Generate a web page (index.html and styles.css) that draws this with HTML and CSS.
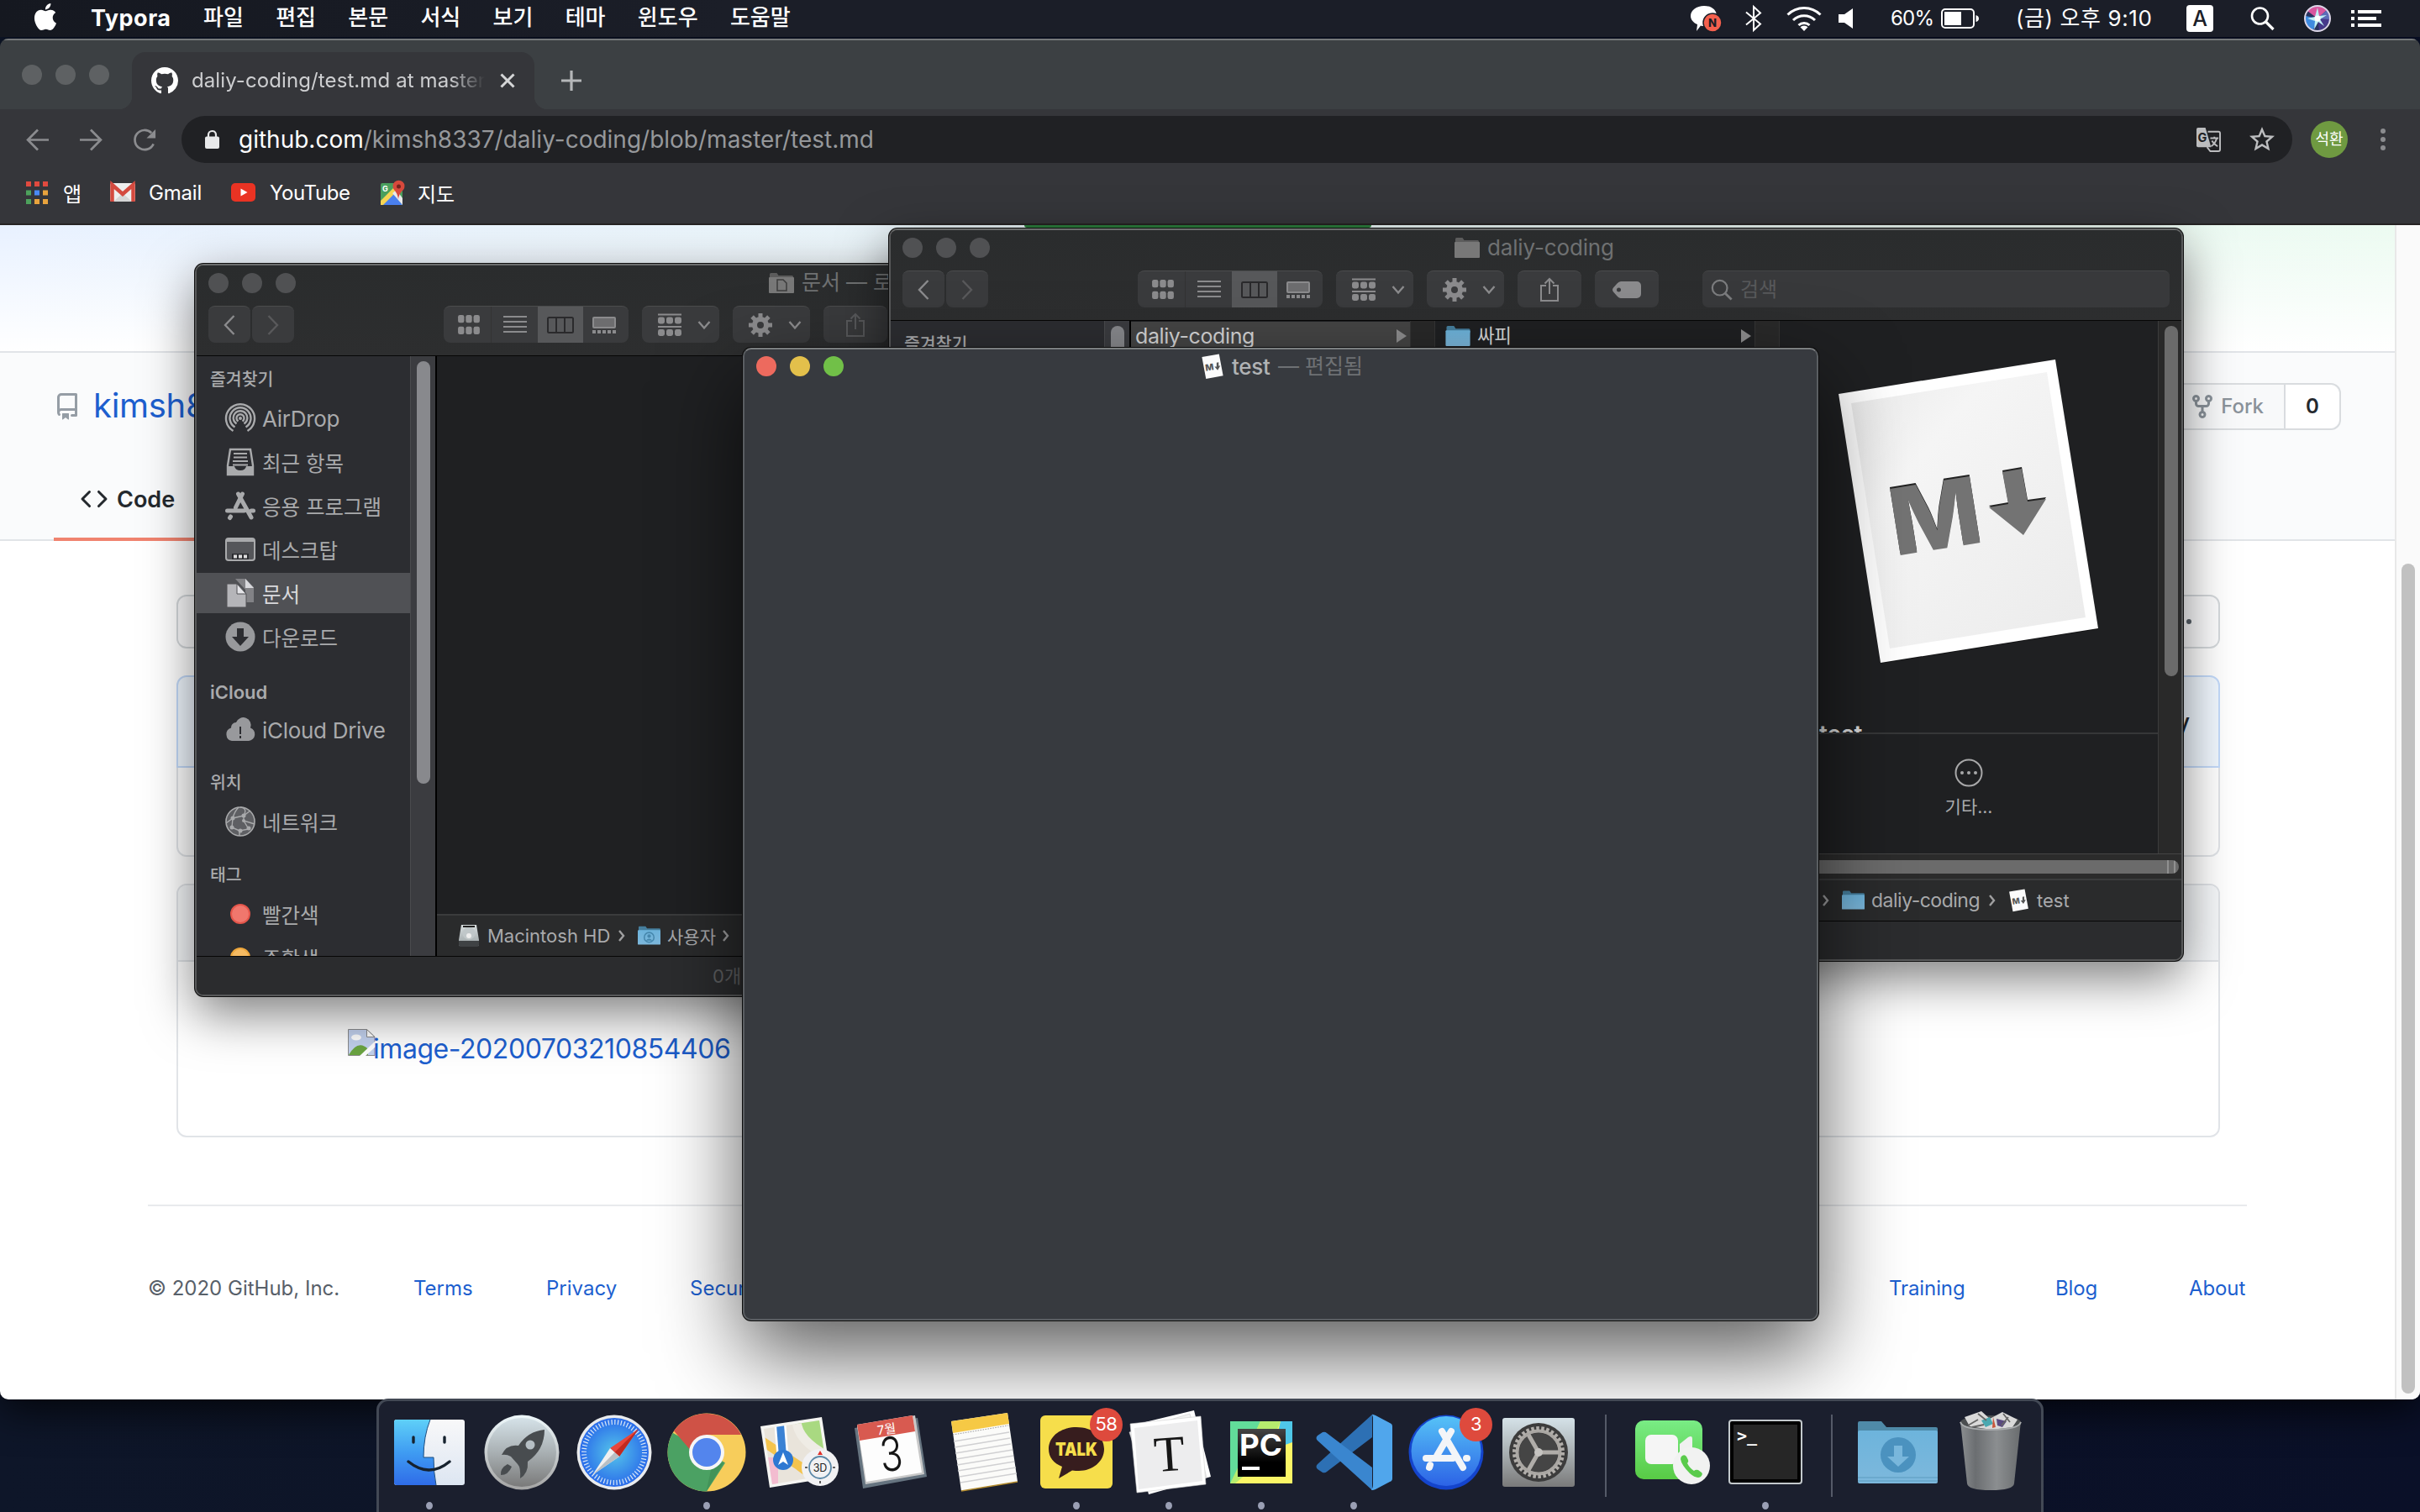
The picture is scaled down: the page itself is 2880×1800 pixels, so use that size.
FILE: index.html
```html
<!DOCTYPE html>
<html lang="ko">
<head>
<meta charset="utf-8">
<title>Desktop</title>
<link rel="stylesheet" href="styles.css">
</head>
<body>
<svg class="defs" width="0" height="0" aria-hidden="true">
  <defs>
    <linearGradient id="gBlueFolder" x1="0" y1="0" x2="0" y2="1"><stop offset="0" stop-color="#6db4dc"/><stop offset="1" stop-color="#7db8dc"/></linearGradient>
    <linearGradient id="gFinderL" x1="0" y1="0" x2="0" y2="1"><stop offset="0" stop-color="#5fd0f8"/><stop offset=".5" stop-color="#3f9cf2"/><stop offset="1" stop-color="#2f6ce8"/></linearGradient>
    <linearGradient id="gFinderR" x1="0" y1="0" x2="0" y2="1"><stop offset="0" stop-color="#f8f8f9"/><stop offset="1" stop-color="#dde6f2"/></linearGradient>
    <linearGradient id="gSilver" x1="0" y1="0" x2="0" y2="1"><stop offset="0" stop-color="#d5e2e8"/><stop offset=".5" stop-color="#a9b0b3"/><stop offset="1" stop-color="#7a7a7a"/></linearGradient>
    <linearGradient id="gRim" x1="0" y1="0" x2="0" y2="1"><stop offset="0" stop-color="#eef8fb"/><stop offset="1" stop-color="#a4a4a4"/></linearGradient>
    <radialGradient id="gSafari"><stop offset="0" stop-color="#55c5ea"/><stop offset="1" stop-color="#2a6cea"/></radialGradient>
    <linearGradient id="gStore" x1="0" y1="0" x2="0" y2="1"><stop offset="0" stop-color="#56c2f7"/><stop offset="1" stop-color="#2c63e6"/></linearGradient>
    <linearGradient id="gFace" x1="0" y1="0" x2="0" y2="1"><stop offset="0" stop-color="#79ec85"/><stop offset="1" stop-color="#58cb45"/></linearGradient>
    <linearGradient id="gTrash" x1="0" y1="0" x2="1" y2="0"><stop offset="0" stop-color="#8c8f91"/><stop offset=".25" stop-color="#6b6e71"/><stop offset=".6" stop-color="#8b8e90"/><stop offset="1" stop-color="#696c6e"/></linearGradient>
    <linearGradient id="gPC" x1="0" y1="0" x2="0" y2="1"><stop offset="0" stop-color="#444"/><stop offset=".7" stop-color="#000"/></linearGradient>
    <linearGradient id="gPaper" x1="0" y1="0" x2="1" y2="1"><stop offset="0" stop-color="#eaeaea"/><stop offset=".3" stop-color="#f5f5f5"/><stop offset="1" stop-color="#ebebeb"/></linearGradient>
    <linearGradient id="gHD" x1="0" y1="0" x2="0" y2="1"><stop offset="0" stop-color="#d9dfe0"/><stop offset="1" stop-color="#9aa2a4"/></linearGradient>
  </defs>
  <symbol id="i-grid" viewBox="0 0 28 26"><g fill="currentColor"><rect width="8" height="10" rx="2.5"/><rect x="10" width="8" height="10" rx="2.5"/><rect x="20" width="8" height="10" rx="2.5"/><rect y="15" width="8" height="10" rx="2.5"/><rect x="10" y="15" width="8" height="10" rx="2.5"/><rect x="20" y="15" width="8" height="10" rx="2.5"/></g></symbol>
  <symbol id="i-list" viewBox="0 0 28 22"><g fill="currentColor"><rect width="28" height="2"/><rect y="6" width="28" height="2"/><rect y="12" width="28" height="2"/><rect y="18" width="28" height="2"/></g></symbol>
  <symbol id="i-cols" viewBox="0 0 32 20"><g fill="none" stroke="#2a2a2c" stroke-width="2"><rect x="1" y="1" width="30" height="18" rx="1.5"/><path d="M11 1v18M21 1v18"/></g></symbol>
  <symbol id="i-gal" viewBox="0 0 28 20"><rect x="1" y="1" width="26" height="12" rx="1" fill="#6d6d6f" stroke="currentColor" stroke-width="2"/><path d="M0 18h4m2 0h4m2 0h4m2 0h4m2 0h4" stroke="currentColor" stroke-width="4"/></symbol>
  <symbol id="i-group" viewBox="0 0 28 27"><g fill="currentColor"><rect width="28" height="2"/><rect y="4" width="8" height="8" rx="2.4"/><rect x="10" y="4" width="8" height="8" rx="2.4"/><rect x="20" y="4" width="8" height="8" rx="2.4"/><rect y="14.500" width="28" height="2"/><rect y="18.500" width="8" height="8" rx="2.400"/><rect x="10" y="18.500" width="8" height="8" rx="2.400"/><rect x="20" y="18.500" width="8" height="8" rx="2.400"/></g></symbol>
  <symbol id="i-down" viewBox="0 0 16 12"><path d="M1.500 2l6.500 7.500L14.500 2" fill="none" stroke="currentColor" stroke-width="2.400"/></symbol>
  <symbol id="i-gear" viewBox="0 0 28 28"><circle cx="14" cy="14" r="7" fill="none" stroke="currentColor" stroke-width="6"/><g stroke="currentColor" stroke-width="5"><path d="M14 0v6M14 22v6M0 14h6M22 14h6M4.100 4.100l4.300 4.300M19.600 19.600l4.300 4.300M4.100 23.900l4.300-4.300M19.600 8.400l4.300-4.300"/></g></symbol>
  <symbol id="i-share" viewBox="0 0 24 30"><path d="M8 10H2v18h20V10h-6M12 20V2M6.500 7.500L12 2l5.500 5.500" fill="none" stroke="currentColor" stroke-width="2"/></symbol>
  <symbol id="i-tag" viewBox="0 0 34 20"><path fill="currentColor" fill-rule="evenodd" d="M10 0h19a5 5 0 015 5v10a5 5 0 01-5 5H10c-2 0-3-1-4.500-2.500L1 12.500Q-1 10 1 7.500l4.500-5Q7.500 0 10 0zM7.500 7.500a2.500 2.500 0 100 5 2.500 2.500 0 000-5z"/></symbol>
  <symbol id="i-mag" viewBox="0 0 28 28"><g fill="none" stroke="currentColor"><circle cx="11.500" cy="11.500" r="9.500" stroke-width="2.400"/><path d="M18.500 18.500l8 8" stroke-width="3"/></g></symbol>
  <symbol id="i-folder" viewBox="0 0 28 24"><path d="M1 1.500Q1 0 2.500 0h7l2 3h15q1.500 0 1.500 1.500V8H1z" fill="#467f9e"/><rect x="0" y="5" width="28" height="18" rx="1" fill="url(#gBlueFolder)"/></symbol>
  <symbol id="i-gfolder" viewBox="0 0 30 24"><path d="M1 1.500Q1 0 2.500 0h7l2 3h16q1.500 0 1.500 1.500V8H1z" fill="#5c5c5c"/><rect y="5" width="30" height="19" rx="1" fill="#787878"/></symbol>
  <symbol id="i-md" viewBox="0 0 28 32"><path d="M1 4L22 0.500 27 27 6 31z" fill="#fbfbfb"/><text x="5" y="20" transform="rotate(-9 14 16)" font-family="Inter" font-weight="800" font-size="11" fill="#555">M</text><path d="M19 11v5h-2.500l3.800 4.500L23.500 15h-2v-4.500z" fill="#555"/></symbol>
  <symbol id="i-store" viewBox="0 0 36 36"><g stroke="currentColor" stroke-linecap="round" fill="none" stroke-width="5"><path d="M20.500 4L12.500 20M15.500 4l15.500 28M2.500 24h20M31 24h2.500M6.500 31l-1 1.500"/></g></symbol>
</svg>

<div class="desktop">
  <header class="menubar">
    <svg class="apple" viewBox="0 0 24 24"><path fill="#fff" d="M12.152 6.896c-.948 0-2.415-1.078-3.960-1.040-2.040.027-3.910 1.183-4.961 3.014-2.117 3.675-.546 9.103 1.519 12.090 1.013 1.454 2.208 3.090 3.792 3.039 1.520-.065 2.090-.987 3.935-.987 1.831 0 2.350.987 3.960.948 1.637-.026 2.676-1.480 3.676-2.948 1.156-1.688 1.636-3.325 1.662-3.415-.039-.013-3.182-1.221-3.220-4.857-.026-3.040 2.480-4.494 2.597-4.559-1.429-2.090-3.623-2.324-4.390-2.376-2-.156-3.675 1.090-4.610 1.090zM15.530 3.830c.843-1.012 1.400-2.427 1.245-3.830-1.207.052-2.662.805-3.532 1.818-.780.896-1.454 2.338-1.273 3.714 1.338.104 2.715-.688 3.559-1.701"/></svg>
    <b class="app-name">Typora</b>
    <nav class="menus"><span>파일</span><span>편집</span><span>본문</span><span>서식</span><span>보기</span><span>테마</span><span>윈도우</span><span>도움말</span></nav>
    <div class="status">
      <svg class="st-chat" viewBox="0 0 38 32"><path d="M17 1c9 0 15 5 15 12 0 8-7 12-15 12-2 0-3 0-4-.5L8 31l1-8C4 21 1 17 1 13 1 6 8 1 17 1z" fill="#fff"/><circle cx="27" cy="21" r="11" fill="#f4604e" stroke="#1a1d26" stroke-width="1.500"/><text x="22" y="26" font-family="Inter" font-weight="800" font-size="13" fill="#1a1d26">N</text></svg>
      <svg class="st-bt" viewBox="0 0 20 30"><path d="M1 7.500l17 14L10 29V1l8 7.500-17 14" fill="none" stroke="#fff" stroke-width="2"/></svg>
      <svg class="st-wifi" viewBox="0 0 42 30"><g fill="none" stroke="#fff" stroke-width="3"><path d="M1.500 10.500a27.500 27.500 0 0139 0M8 17a18.500 18.500 0 0126 0M14.500 23a9.500 9.500 0 0113 0"/></g><path d="M21 30l-4.500-4.800a6.500 6.500 0 019 0z" fill="#fff"/></svg>
      <svg class="st-vol" viewBox="0 0 17 24"><path d="M0 7h7l10-7v24L7 17H0z" fill="#fff"/></svg>
      <span class="st-pct">60%</span>
      <svg class="st-bat" viewBox="0 0 45 24"><rect x="1" y="1" width="38" height="22" rx="4" fill="none" stroke="#fff" stroke-width="2"/><rect x="4" y="4" width="20" height="16" fill="#fff"/><path d="M41.500 8q3.500 1 3.500 4t-3.500 4z" fill="#fff"/></svg>
      <span class="st-time">(금) 오후 9:10</span>
      <span class="st-key">A</span>
      <svg class="st-mag" viewBox="0 0 28 28"><g fill="none" stroke="#fff"><circle cx="11" cy="11" r="9.500" stroke-width="2.600"/><path d="M18 18l9 9" stroke-width="3.200"/></g></svg>
      <svg class="st-siri" viewBox="0 0 32 32"><circle cx="16" cy="16" r="15" fill="#29345f"/><path d="M16 16L4 7A15 15 0 0127 6z" fill="#d9579f"/><path d="M16 16L27 6a15 15 0 013 14z" fill="#5c6bb8"/><path d="M16 16L2 13a15 15 0 009 17z" fill="#3f8be0"/><path d="M16 16l14 1a15 15 0 01-12 13z" fill="#46398a"/><path d="M16 3l2 10 9-1-8 5 5 8-7-5-5 9 1-10-9-3 9-2z" fill="#bff0f4"/><circle cx="16" cy="16" r="3.500" fill="#fff"/><circle cx="16" cy="16" r="15" fill="none" stroke="#dcd6e8" stroke-width="2"/></svg>
      <svg class="st-menu" viewBox="0 0 36 20"><path d="M0 2h4M0 10h4M0 18h4M8 2h28M8 10h22M8 18h28" stroke="#fff" stroke-width="4"/></svg>
    </div>
  </header>

  <section class="chrome">
    <div class="tabstrip">
      <div class="lights off"><i></i><i></i><i></i></div>
      <div class="tab">
        <svg class="tab-icon" viewBox="0 0 16 16"><path fill="#fff" d="M8 0C3.580 0 0 3.580 0 8c0 3.540 2.290 6.530 5.470 7.590.4.070.55-.170.55-.380 0-.190-.010-.820-.010-1.490-2.010.370-2.530-.490-2.690-.940-.090-.230-.480-.940-.820-1.130-.280-.150-.680-.520-.010-.530.630-.010 1.080.580 1.230.820.720 1.210 1.870.870 2.330.660.070-.520.280-.870.510-1.070-1.780-.2-3.640-.890-3.640-3.950 0-.870.310-1.590.820-2.150-.080-.2-.360-1.020.080-2.120 0 0 .670-.210 2.200.820.640-.180 1.320-.270 2-.270.680 0 1.360.090 2 .270 1.530-1.040 2.200-.820 2.200-.820.440 1.100.160 1.920.080 2.120.510.560.820 1.270.820 2.150 0 3.070-1.870 3.750-3.650 3.950.290.250.540.730.540 1.480 0 1.070-.010 1.930-.010 2.200 0 .210.150.460.550.380A8.013 8.013 0 0016 8c0-4.420-3.580-8-8-8z"/></svg>
        <span class="tab-title">daliy-coding/test.md at master</span>
        <svg class="tab-x" viewBox="0 0 18 18"><path d="M1.500 1.500l15 15M16.500 1.500l-15 15" stroke="#d5d6d7" stroke-width="3"/></svg>
      </div>
      <svg class="tab-plus" viewBox="0 0 24 24"><path d="M12 0v24M0 12h24" stroke="#b5b7b9" stroke-width="3.200"/></svg>
    </div>
    <div class="toolbar">
      <svg class="nav-i" viewBox="0 0 26 26"><path d="M26 13H2M13.500 1.500L2 13l11.500 11.500" fill="none" stroke="#8b8c8f" stroke-width="2.600"/></svg>
      <svg class="nav-i" viewBox="0 0 26 26"><path d="M0 13h24M12.500 1.500L24 13 12.500 24.500" fill="none" stroke="#8b8c8f" stroke-width="2.600"/></svg>
      <svg class="nav-i" viewBox="0 0 28 28"><path d="M24.500 19A12 12 0 1122 5.500" fill="none" stroke="#8b8c8f" stroke-width="2.800"/><path d="M27 1v11H16z" fill="#8b8c8f"/></svg>
      <div class="omnibox">
        <svg class="lock" viewBox="0 0 17 22"><rect y="7.500" width="17" height="14.500" rx="2" fill="#e8e9ea"/><path d="M4 8V5.500a4.500 4.500 0 019 0V8" fill="none" stroke="#e8e9ea" stroke-width="2.200"/></svg>
        <span class="url"><em>github.com</em>/kimsh8337/daliy-coding/blob/master/test.md</span>
        <svg class="omni-i" viewBox="0 0 30 30"><path d="M2 0h9l7 24H2q-2 0-2-2V2q0-2 2-2z" fill="#bcbdbf"/><path d="M14 5h13q2 0 2 2v20q0 2-2 2H17l-4-5" fill="none" stroke="#bcbdbf" stroke-width="2"/><text x="1.500" y="18" font-family="Inter" font-weight="700" font-size="15" fill="#202124">G</text><path d="M17 13h10M22 11v2M25 13q-2 7-7 10M19 16q2 4 7 7" fill="none" stroke="#bcbdbf" stroke-width="2"/></svg>
        <svg class="omni-i star" viewBox="0 0 24 24"><path fill="#bcbdbf" d="M22 9.240l-7.190-.620L12 2 9.190 8.630 2 9.240l5.460 4.730L5.820 21 12 17.270 18.180 21l-1.630-7.030L22 9.240zM12 15.400l-3.760 2.270 1-4.280-3.320-2.880 4.380-.380L12 6.100l1.710 4.040 4.380.380-3.320 2.880 1 4.280L12 15.400z"/></svg>
      </div>
      <span class="avatar">석환</span>
      <span class="dots"><i></i><i></i><i></i></span>
    </div>
    <div class="bookmarks">
      <svg class="bm-apps" viewBox="0 0 26 27"><g><path d="M0 3h26" stroke="#e04a3f" stroke-width="6" stroke-dasharray="6 4"/><path d="M0 13.500h6" stroke="#4da15c" stroke-width="6"/><path d="M10 13.500h6" stroke="#4a8af4" stroke-width="6"/><path d="M20 13.500h6" stroke="#e8a33d" stroke-width="6"/><path d="M0 24h6" stroke="#4da15c" stroke-width="6"/><path d="M10 24h6M20 24h6" stroke="#e8a33d" stroke-width="6"/></g></svg>
      <span class="bm-t t1">앱</span>
      <svg class="bm-i" viewBox="0 0 30 22"><rect width="30" height="22" rx="2" fill="#eee"/><path d="M4 22L15 12l11 10z" fill="#d5d5d5"/><path d="M2.500 22V2L15 13 27.500 2v20" fill="none" stroke="#d44a3f" stroke-width="4.500"/></svg>
      <span class="bm-t t2">Gmail</span>
      <svg class="bm-i" viewBox="0 0 30 22"><rect width="29" height="22" rx="5" fill="#ea3323"/><path d="M11.500 6.500l8 4.500-8 4.500z" fill="#fff"/></svg>
      <span class="bm-t t3">YouTube</span>
      <svg class="bm-map" viewBox="0 0 28 29"><path d="M2 3h24v26H0V5q0-2 2-2z" fill="#4a9f5d"/><path d="M0 29L14 14l12 15z" fill="#4a80ee"/><path d="M0 29V24L16 8l4 4L3 29z" fill="#f6d453"/><path d="M14 15l5-4 7 10v8z" fill="#e9e9e9"/><text x="2" y="13" font-family="Inter" font-size="9" font-weight="700" fill="#fff">G</text><path d="M21 22q-1-7-5-11a7 7 0 1111 0q-5 4-6 11z" fill="#d8493c"/><circle cx="21.500" cy="7" r="2.500" fill="#75231c"/></svg>
      <span class="bm-t t4">지도</span>
    </div>
    <div class="view">
      <div class="page">
        <div class="gh-top"><div class="gh-cta"></div></div>
        <div class="gh-head">
          <div class="gh-repo">
            <svg class="repo-i" viewBox="0 0 16 16"><path fill="#959da5" fill-rule="evenodd" d="M2 2.500A2.500 2.500 0 014.500 0h8.750a.75.75 0 01.75.75v12.500a.75.75 0 01-.75.75h-2.500a.75.75 0 110-1.500h1.750v-2h-8a1 1 0 00-.714 1.700.75.75 0 01-1.072 1.050A2.495 2.495 0 012 11.500v-9zm10.500-1V9h-8c-.356 0-.694.074-1 .208V2.500a1 1 0 011-1h8zM5 12.250v3.250a.25.25 0 00.4.2l1.450-1.087a.25.25 0 01.3 0L8.600 15.700a.25.25 0 00.4-.2v-3.250a.25.25 0 00-.25-.25h-3.500a.25.25 0 00-.25.25z"/></svg>
            <a class="owner">kimsh8337</a>
            <div class="fork">
              <span class="fork-b"><svg viewBox="0 0 16 16"><path fill="#8a929a" fill-rule="evenodd" d="M5 3.250a.75.75 0 11-1.500 0 .75.75 0 011.500 0zm0 2.122a2.250 2.250 0 10-1.500 0v.878A2.250 2.250 0 005.750 8.500h1.500v2.128a2.251 2.251 0 101.500 0V8.500h1.500a2.250 2.250 0 002.250-2.250v-.878a2.250 2.250 0 10-1.500 0v.878a.75.75 0 01-.75.75h-4.500A.75.75 0 015 6.250v-.878zm3.750 7.378a.75.75 0 11-1.500 0 .75.75 0 011.500 0zm3-8.750a.75.75 0 100-1.500.75.75 0 000 1.500z"/></svg>Fork</span>
              <b>0</b>
            </div>
          </div>
          <div class="gh-tab"><svg viewBox="0 0 16 16"><path fill="#24292e" fill-rule="evenodd" d="M4.720 3.220a.75.75 0 011.060 1.060L2.060 8l3.720 3.720a.75.75 0 11-1.060 1.060L.47 8.530a.75.75 0 010-1.060l4.250-4.250zm6.560 0a.75.75 0 10-1.060 1.060L13.940 8l-3.720 3.720a.75.75 0 101.060 1.060l4.250-4.250a.75.75 0 000-1.060l-4.250-4.250z"/></svg>Code</div>
        </div>
        <div class="gh-main">
          <div class="gh-bar"><span class="btn"></span><span class="btn more"><i></i><i></i><i></i></span></div>
          <div class="box commit"><div class="commit-h">History</div><div class="commit-b"></div></div>
          <div class="box file"><div class="file-h"></div>
            <div class="file-b">
              <svg class="broken" viewBox="0 0 33 32"><path d="M.500.500h22l9.500 9V31.500H.500z" fill="#c3d2ef" stroke="#8c8c8c"/><path d="M22.500.500v9h9.500z" fill="#fff" stroke="#8c8c8c"/><ellipse cx="10" cy="10" rx="6" ry="3.500" fill="#fff"/><path d="M1 31Q12 12 24 24v7z" fill="#6ba542"/><path d="M14 32L33 14v7L21 32z" fill="#fff"/></svg><a>image-20200703210854406</a>
            </div>
          </div>
        </div>
        <footer class="gh-foot">
          <div class="foot-l"><span>© 2020 GitHub, Inc.</span><a>Terms</a><a>Privacy</a><a>Security</a></div>
          <div class="foot-r"><a>Training</a><a>Blog</a><a>About</a></div>
        </footer>
      </div>
      <div class="sb"><i></i></div>
    </div>
  </section>

  <section class="finder f1">
    <div class="f-top">
      <div class="f-title"><div class="lights off"><i></i><i></i><i></i></div><div class="f-name"><svg viewBox="0 0 30 24"><use href="#i-gfolder"/><path d="M10 8h7l4 4v9H10z" fill="none" stroke="#3c3c3c" stroke-width="1.500"/></svg><span class="k">문서 — 로컬</span></div></div>
      <div class="f-tools">
        <span class="tb nav"><svg viewBox="0 0 14 24"><path d="M12.500 1L2 12l10.500 11" fill="none" stroke="#8b8b8d" stroke-width="2.400"/></svg></span><span class="tb nav"><svg viewBox="0 0 14 24"><path d="M1.500 1L12 12 1.500 23" fill="none" stroke="#59595b" stroke-width="2.400"/></svg></span>
        <div class="seg"><span><svg><use href="#i-grid"/></svg></span><span><svg><use href="#i-list"/></svg></span><span class="on"><svg class="w"><use href="#i-cols"/></svg></span><span><svg><use href="#i-gal"/></svg></span></div>
        <span class="tb drop"><svg><use href="#i-group"/></svg><svg class="dn"><use href="#i-down"/></svg></span>
        <span class="tb drop"><svg><use href="#i-gear"/></svg><svg class="dn"><use href="#i-down"/></svg></span>
        <span class="tb act dim"><svg><use href="#i-share"/></svg></span>
      </div>
    </div>
    <div class="f-body">
      <div class="side">
        <h4 class="k">즐겨찾기</h4>
        <div class="it"><svg viewBox="0 0 36 36"><g fill="none" stroke="currentColor" stroke-width="2.400"><path d="M9.500 33a17 17 0 1117 0M11.500 28.500a12.500 12.500 0 1113 0M13.500 24.500a8.300 8.300 0 119 0M15.500 21.500a4.500 4.500 0 115 0"/></g><circle cx="18" cy="18" r="2" fill="currentColor"/></svg>AirDrop</div>
        <div class="it k"><svg viewBox="0 0 36 36"><path d="M6 3h24l3 19v11H3V22z" fill="none" stroke="currentColor" stroke-width="2.400"/><path d="M3 23h8q1 5 7 5t7-5h8v10q0 1-1 1H4q-1 0-1-1z" fill="currentColor"/><path d="M10 8h16M10 12.500h16M9 17h18M9 21.500h18" stroke="currentColor" stroke-width="2"/></svg>최근 항목</div>
        <div class="it k"><svg><use href="#i-store"/></svg>응용 프로그램</div>
        <div class="it k"><svg viewBox="0 0 36 36"><rect x="1" y="5" width="34" height="26" rx="3" fill="#55565a" stroke="currentColor" stroke-width="2"/><path d="M1 6h34v3H1z" fill="currentColor"/><rect x="8" y="23" width="20" height="7" fill="#2c2d31"/><path d="M10 26.500h4m2 0h4m2 0h4" stroke="#ddd" stroke-width="4"/></svg>데스크탑</div>
        <div class="it k sel"><svg viewBox="0 0 36 36"><path d="M12 1h12l10 10v18H24V14z" fill="#828286"/><path d="M24 1l10 11H24z" fill="#d8d8dc"/><path d="M2 7h12l11 12v16H2z" fill="#b5b5b9" stroke="#505155"/><path d="M14 7l11 12H14z" fill="#e4e4e8" stroke="#505155"/></svg>문서</div>
        <div class="it k"><svg viewBox="0 0 36 36"><circle cx="18" cy="18" r="17.500" fill="#98999c"/><path d="M14 8h8v10h6L18 29 8 18h6z" fill="#2c2d31"/></svg>다운로드</div>
        <h4 class="s2">iCloud</h4>
        <div class="it a2"><svg viewBox="0 0 36 36"><path d="M8 31a8 8 0 01-1-15.500A6 6 0 0113 9a9 9 0 0117 6.500A8 8 0 0128 31z" fill="#98999c"/><path d="M18 14v9M18 25v3" stroke="#2c2d31" stroke-width="2"/></svg>iCloud Drive</div>
        <h4 class="k s3">위치</h4>
        <div class="it k a3"><svg viewBox="0 0 36 36"><circle cx="18" cy="18" r="17" fill="#5e5f63" stroke="currentColor" stroke-width="1.600"/><g fill="none" stroke="currentColor" stroke-width="1.400"><path d="M9 14L22 11l8-6M9 14L8 25l9 4 11-2-6-10L22 11M1 20l8-6q2-8 7-13M22 17l13 4M17 29v6M22 11Q27 2 18 1"/></g><g fill="currentColor"><circle cx="9" cy="14" r="2.500"/><circle cx="22" cy="11" r="2.500"/><circle cx="22" cy="17" r="2"/><circle cx="8" cy="25" r="2.500"/><circle cx="18" cy="29" r="2.500"/><circle cx="28" cy="26" r="2.500"/></g></svg>네트워크</div>
        <h4 class="k s4">태그</h4>
        <div class="it k a4"><b class="red"></b>빨간색</div>
        <div class="it k"><b class="org"></b>주황색</div>
      </div>
      <div class="s-bar"><i></i></div>
      <div class="content">
        <div class="blank"></div>
        <div class="path"><svg class="hd" viewBox="0 0 24 26"><path d="M3 0h18l3 18v7H0v-7z" fill="url(#gHD)"/><path d="M0 19h24v5q0 2-2 2H2q-2 0-2-2z" fill="#3f4244"/><circle cx="12" cy="10" r="7.500" fill="#c0c7c9"/><circle cx="12" cy="13" r="3" fill="#eee"/><path d="M5 2h14" stroke="#222" stroke-width="2"/></svg><span class="p1">Macintosh HD</span><svg class="ch" viewBox="0 0 8 14"><path d="M1 1l5 6-5 6" fill="none" stroke="#a0a0a1" stroke-width="2.400"/></svg><svg class="fo" viewBox="0 0 28 24"><use href="#i-folder"/><circle cx="14" cy="14" r="6" fill="none" stroke="#4788ae" stroke-width="1.600"/><circle cx="14" cy="12.500" r="2.200" fill="#4788ae"/><path d="M10 18q4-5 8 0z" fill="#4788ae"/></svg><span class="p2">사용자</span><svg class="ch" viewBox="0 0 8 14"><path d="M1 1l5 6-5 6" fill="none" stroke="#a0a0a1" stroke-width="2.400"/></svg></div>
      </div>
    </div>
    <div class="f-stat">0개의 항목</div>
  </section>

  <section class="finder f2">
    <div class="f-top">
      <div class="f-title"><div class="lights off"><i></i><i></i><i></i></div><div class="f-name"><svg><use href="#i-gfolder"/></svg><span>daliy-coding</span></div></div>
      <div class="f-tools">
        <span class="tb nav"><svg viewBox="0 0 14 24"><path d="M12.500 1L2 12l10.500 11" fill="none" stroke="#8b8b8d" stroke-width="2.400"/></svg></span><span class="tb nav"><svg viewBox="0 0 14 24"><path d="M1.500 1L12 12 1.500 23" fill="none" stroke="#59595b" stroke-width="2.400"/></svg></span>
        <div class="seg"><span><svg><use href="#i-grid"/></svg></span><span><svg><use href="#i-list"/></svg></span><span class="on"><svg class="w"><use href="#i-cols"/></svg></span><span><svg><use href="#i-gal"/></svg></span></div>
        <span class="tb drop"><svg><use href="#i-group"/></svg><svg class="dn"><use href="#i-down"/></svg></span>
        <span class="tb drop"><svg><use href="#i-gear"/></svg><svg class="dn"><use href="#i-down"/></svg></span>
        <span class="tb act"><svg><use href="#i-share"/></svg></span>
        <span class="tb act tag"><svg><use href="#i-tag"/></svg></span>
        <div class="search"><svg><use href="#i-mag"/></svg>검색</div>
      </div>
    </div>
    <div class="f-body">
      <div class="side"><h4 class="k">즐겨찾기</h4></div>
      <div class="s-bar b2"><i></i></div>
      <div class="content">
        <div class="cols">
          <div class="col c1"><div class="row on"><span>daliy-coding</span><i></i></div></div><div class="strip"></div>
          <div class="col c2"><div class="row"><svg><use href="#i-folder"/></svg><span class="k">싸피</span><i></i></div></div><div class="strip"></div>
          <div class="preview">
            <div class="thumb">
              <svg class="paper" viewBox="0 0 340 380"><path d="M40 51L298 10l51 320L90 371z" fill="#000" opacity=".35"/><path d="M40 50L298 9l51 320L90 370z" fill="#fff"/><path d="M55 61L288 24l46 292L101 353z" fill="url(#gPaper)"/><g transform="translate(113 241) rotate(-9)"><text x="-6" y="-1" font-family="Inter" font-weight="800" font-size="110" textLength="109" lengthAdjust="spacingAndGlyphs" fill="#222">M</text><text x="-6" y="1" font-family="Inter" font-weight="800" font-size="110" textLength="109" lengthAdjust="spacingAndGlyphs" fill="#737373">M</text></g><path d="M235 141l23-4 7 39 22-3-27 43-41-33 23-4z" fill="#222"/><path d="M235 143l23-4 7 39 22-3-27 43-41-33 23-4z" fill="#737373"/></svg>
              <div class="fname">test</div>
            </div>
            <div class="more-a"><svg viewBox="0 0 34 34"><circle cx="17" cy="17" r="15.500" fill="none" stroke="#a8a8a9" stroke-width="2"/><g fill="#a8a8a9"><circle cx="9" cy="17" r="2"/><circle cx="17" cy="17" r="2"/><circle cx="25" cy="17" r="2"/></g></svg><span>기타...</span></div>
          </div>
          <div class="v-bar"><i></i></div>
        </div>
        <div class="h-bar"><i></i></div>
        <div class="path"><svg class="ch" viewBox="0 0 8 14"><path d="M1 1l5 6-5 6" fill="none" stroke="#a0a0a1" stroke-width="2.400"/></svg><svg class="fo"><use href="#i-folder"/></svg><span class="p3">daliy-coding</span><svg class="ch" viewBox="0 0 8 14"><path d="M1 1l5 6-5 6" fill="none" stroke="#a0a0a1" stroke-width="2.400"/></svg><svg class="mdi"><use href="#i-md"/></svg><span>test</span></div>
      </div>
    </div>
    <div class="f-stat"></div>
  </section>

  <section class="typora">
    <div class="t-bar"><div class="lights"><i></i><i></i><i></i></div><div class="t-name"><svg><use href="#i-md"/></svg><b>test</b><span>— 편집됨</span></div></div>
  </section>

  <footer class="dock">
    <div class="app run"><svg viewBox="0 0 110 110"><rect x="13" y="15" width="84" height="78" rx="3" fill="url(#gFinderR)"/><path d="M16 15h40q-8 20-8 45h12q0 18 3 33H16q-3 0-3-3V18q0-3 3-3z" fill="url(#gFinderL)"/><path d="M56 15q-8 20-8 45h12q0 18 3 33" fill="none" stroke="#1d4f80" stroke-width="1"/><path d="M36 36v6M73 36v6M30 65q25 20 49 0" fill="none" stroke="#16222e" stroke-width="3.400" stroke-linecap="round"/></svg></div>
    <div class="app"><svg viewBox="0 0 110 110"><circle cx="55" cy="54" r="44.500" fill="url(#gRim)"/><circle cx="55" cy="54" r="41" fill="url(#gSilver)"/><path d="M82 27q-20 2-31 19-14-2-20 11 6-1 11 2l8 9q4 4 3 17 10-6 9-20 20-14 20-38zM38 68q-9 5-8 13 9 0 13-10z" fill="#484c4f"/><circle cx="65" cy="45" r="5.500" fill="#b6bfc4"/></svg></div>
    <div class="app"><svg viewBox="0 0 110 110"><circle cx="55" cy="54" r="44.500" fill="#e9ebed"/><circle cx="55" cy="54" r="41" fill="url(#gSafari)"/><circle cx="55" cy="54" r="36" fill="none" stroke="#dbe8f7" stroke-width="6" stroke-dasharray="1.200 2.570"/><path d="M84 26L61 59 50 49z" fill="#e8463c"/><path d="M84 26L61 59l-5.500-5z" fill="#c02a20"/><path d="M29 81l21-32 11 10z" fill="#f0f0f0"/><path d="M29 81l26.500-27 5.500 5z" fill="#b9bfc4"/></svg></div>
    <div class="app run"><svg viewBox="0 0 110 110"><circle cx="55" cy="54" r="46.500" fill="#f7cd5b"/><path d="M55 54L14.700 30.800A46.500 46.500 0 0055 100.500l22-34z" fill="#4ba163"/><path d="M55 54H38L16 28.500a46.500 46.500 0 0180 4.500H55z" fill="#cf5246"/><path d="M54.500 100.500L76 65 60 75z" fill="#3e8a52" opacity=".6"/><circle cx="55" cy="54" r="21" fill="#f6f6f6"/><circle cx="55" cy="54" r="17" fill="#5385ed"/></svg></div>
    <div class="app"><svg viewBox="0 0 110 110"><path d="M9 23L82 12 93 84 20 96z" fill="#f5f5f2"/><clipPath id="cm"><path d="M13 26L79 16 89 81 23 92z"/></clipPath><g clip-path="url(#cm)"><path d="M9 10h90v90H9z" fill="#e9e4db"/><path d="M45 15h50v50z" fill="#a9d981"/><path d="M52 15q0 25 40 45" fill="none" stroke="#efece5" stroke-width="11"/><path d="M10 60h20v40H10z" fill="#f3bcd0"/><path d="M10 40l45 30 40 30" fill="none" stroke="#f4c44e" stroke-width="11"/><path d="M32 15l4 50" stroke="#fff" stroke-width="14"/><path d="M32 15l4 50" stroke="#3b82d4" stroke-width="9"/></g><circle cx="36" cy="63" r="12" fill="#2e78d2"/><path d="M36 54l6 15-6-4-6 4z" fill="#fff"/><circle cx="80" cy="72" r="22" fill="#f1f1f3"/><circle cx="80" cy="72" r="13" fill="none" stroke="#5c89a8" stroke-width="1.800"/><text x="80" y="77" text-anchor="middle" font-family="Inter" font-size="12.500" fill="#222">3D</text><path d="M80 52l3 5h-6z" fill="#e0302a"/><path d="M62 72h3M95 72h3M80 88v3" stroke="#333" stroke-width="1.600"/></svg></div>
    <div class="app"><svg viewBox="0 0 110 110"><path d="M11 25l75-12 11 70-76 14z" fill="#667480"/><path d="M14 22l69-12 11 70-70 12z" fill="#c8c8c8"/><path d="M14 21l66-11 11 68-66 11z" fill="#fdfdfd"/><path d="M14 21l66-11 3 19-66 11z" fill="#d85a50"/><text x="49" y="32" text-anchor="middle" transform="rotate(-8 49 26)" font-family="Inter, Noto Sans CJK KR" font-size="15" fill="#fff">7월</text><text x="55" y="76" text-anchor="middle" transform="rotate(-6 55 60)" font-family="Inter" font-weight="300" font-size="56" textLength="27" lengthAdjust="spacingAndGlyphs" fill="#161616">3</text></svg></div>
    <div class="app"><svg viewBox="0 0 110 110"><path d="M16 17L83 7l12 82-67 11z" fill="#fbfbf9"/><path d="M16 17L83 7l2 13-67 11z" fill="#f6c945"/><path d="M18 33l66-11" stroke="#999" stroke-dasharray="1.500 1.500"/><path d="M19 41l66-11M20 48l66-11M21 55l66-11M22 62l67-11M23 69l67-11M24 76l67-11M26 83l67-11M27 90l67-11" stroke="#d0d0d2" stroke-width="1.300"/><path d="M28 100l67-11" stroke="#b28a2c" stroke-width="1.500"/></svg></div>
    <div class="app run"><svg viewBox="0 0 110 110"><rect x="12" y="10" width="86" height="87" rx="6" fill="#f6de4b"/><path d="M55 24c19 0 33 11 33 26S74 76 58 76q-4 0-8-.5L34 85l4-14C28 67 22 60 22 50c0-15 14-26 33-26z" fill="#371d1e"/><text x="55" y="58" text-anchor="middle" font-family="Inter" font-weight="900" font-size="22" textLength="50" lengthAdjust="spacingAndGlyphs" fill="#f6de4b">TALK</text></svg><em>58</em></div>
    <div class="app run"><svg viewBox="0 0 110 110"><path d="M10 22L85 4l20 79-74 21z" fill="#fff"/><path d="M8 30L80 8l20 76-70 16z" fill="#f2f2f2" stroke="#ccc" stroke-width=".6"/><path d="M9 20L93 11l6 81-82 10z" fill="#fff" stroke="#ccc" stroke-width=".6"/><path d="M14 25l75-9 6 72-76 10z" fill="#ededee"/><text x="56" y="76" text-anchor="middle" transform="rotate(-4 56 60)" font-family="Liberation Serif" font-size="60" fill="#161616">T</text></svg></div>
    <div class="app run"><svg viewBox="0 0 110 110"><rect x="18" y="17" width="74" height="74" fill="#fbf566"/><path d="M18 17h36L22 91h-4z" fill="#62dc9a"/><path d="M54 17h24L60 60 24 91h-6z" fill="#b7ec6e"/><path d="M78 17h14v25l-22 8z" fill="#4fc7e8"/><rect x="27" y="26" width="57" height="57" fill="url(#gPC)"/><text x="29" y="58" font-family="Inter" font-weight="700" font-size="35" textLength="51" lengthAdjust="spacingAndGlyphs" fill="#fff">PC</text><path d="M32 73h21" stroke="#fff" stroke-width="4"/></svg></div>
    <div class="app run"><svg viewBox="0 0 110 110"><path d="M77 9L12 68q-3 3 0 6l6 4q3 1 5-1L77 36z" fill="#2d70b4"/><path d="M77 99L12 40q-3-3 0-6l6-4q3-1 5 1l54 41z" fill="#3a86cf"/><path d="M77 9q-1-1 4 1l17 9q3 1 3 4v62q0 3-3 4l-17 9q-5 2-5 0 2-1 2-6V15q0-4-1-6z" fill="#50a6ec"/></svg></div>
    <div class="app"><svg viewBox="0 0 110 110"><circle cx="55" cy="54" r="44.500" fill="#1444cc"/><circle cx="55" cy="52.500" r="41.500" fill="url(#gStore)"/><g stroke="#f3f5f8" stroke-width="8" stroke-linecap="round"><path d="M61 29L44 58M50 29l25 43M31 61h32M80 61h-1M36 69l-1 3"/></g></svg><em>3</em></div>
    <div class="app"><svg viewBox="0 0 110 110"><rect x="12" y="13" width="86" height="82" rx="3" fill="url(#gSilver)"/><circle cx="55" cy="54" r="35" fill="#3c3c3c"/><circle cx="55" cy="54" r="25.500" fill="none" stroke="#a9a6a2" stroke-width="4"/><circle cx="55" cy="54" r="28.500" fill="none" stroke="#b1aeaa" stroke-width="5" stroke-dasharray="3.500 2.470"/><circle cx="55" cy="54" r="23" fill="#454545"/><path d="M55 54h24M55 54L43 33M55 54L43 75" stroke="#b0ada9" stroke-width="5"/><circle cx="55" cy="54" r="5" fill="#c5c3c0"/></svg></div>
    <div class="sep"></div>
    <div class="app"><svg viewBox="0 0 110 110"><rect x="10" y="16" width="80" height="70" rx="10" fill="url(#gFace)"/><rect x="22" y="33" width="39" height="35" rx="7" fill="#f5f5f5"/><path d="M63 44l10-8q5-3 5 2v20H63z" fill="#f0f0f0"/><circle cx="77" cy="70" r="22" fill="#f1f2f1"/><path d="M66 58q3-2 5 1l2 4q1 2-1 4 3 6 8 9 2-2 5-1l4 3q2 2-1 5-5 3-13-4-10-10-11-17 0-3 2-4z" fill="#5acb4c"/></svg></div>
    <div class="app run"><svg viewBox="0 0 110 110"><rect x="12" y="16" width="86" height="75" rx="3" fill="#000" stroke="#c3c9cc" stroke-width="2"/><rect x="17" y="21" width="76" height="65" fill="#262626"/><text x="21" y="41" font-family="DejaVu Sans Mono" font-weight="700" font-size="20" fill="#fff">&gt;_</text></svg></div>
    <div class="sep s"></div>
    <div class="app"><svg viewBox="0 0 110 110"><path d="M7 19q0-2 2-2h26l6 7h59q2 0 2 2v10H7z" fill="#4f8aa8"/><rect x="7" y="28" width="95" height="63" rx="2" fill="url(#gBlueFolder)"/><path d="M7 84h95M7 88h95" stroke="#5c9cc0" stroke-width="1"/><circle cx="55" cy="57" r="21" fill="#4b92bf"/><path d="M50 46h10v13h8L55 71 42 59h8z" fill="#79b7dc"/></svg></div>
    <div class="app"><svg viewBox="0 0 110 110"><path d="M19 17h72l-8 74q-1 8-28 8t-28-8z" fill="url(#gTrash)"/><ellipse cx="55" cy="18" rx="36" ry="8" fill="#4b4e50"/><path d="M24 12l20-7 10 9 15-8 18 9-6 9-25 3-26-4z" fill="#d9d9d9"/><path d="M44 16l10-4 4 8-9 4z" fill="#49a8b0"/><path d="M62 14l12 3-5 7-6-2z" fill="#5a4a80"/><path d="M58 12l3 12-4 1z" fill="#c8553a"/><path d="M28 22l12-7M40 8l10 8M70 8l8 10M33 24l14-3M76 12l-8 10" stroke="#666" stroke-width="1.800"/><path d="M19 18q3 9 36 9t36-9" fill="none" stroke="#a9acae" stroke-width="2"/></svg></div>
  </footer>
</div>
</body>
</html>
```
FILE: styles.css
```css
* { box-sizing: border-box; }
html, body { margin: 0; padding: 0; }
body { font-family: Inter, "Noto Sans CJK KR", sans-serif; font-size: 26px; overflow: hidden; }
svg { display: block; flex: none; overflow: visible; }
.defs { position: absolute; }
i, em { font-style: normal; display: block; }
.desktop { position: relative; width: 2880px; height: 1800px; overflow: hidden; background: linear-gradient(90deg, #0e1629, #0c1226 60%, #0a1028); }

/* menu bar */
.menubar { height: 44px; display: flex; align-items: center; padding-left: 38px; background: linear-gradient(90deg, #151820, #1b1e28 30%, #1b1e28); color: #fff; line-height: 44px; }
.apple { width: 32px; height: 32px; margin-top: -4px; }
.app-name { font-size: 27px; letter-spacing: .5px; margin-left: 38px; width: 134px; }
.menus { display: flex; gap: 38.300px; font-size: 26px; margin-top: -3px; font-weight: 500; }
.status { display: flex; align-items: center; margin-left: auto; padding-right: 46px; }
.st-chat { width: 38px; height: 32px; margin-right: 28px; }
.st-bt { width: 20px; height: 30px; margin-right: 29px; }
.st-wifi { width: 42px; height: 30px; margin-right: 20px; }
.st-vol { width: 17px; height: 24px; margin-right: 45px; }
.st-pct { font-size: 24px; width: 60px; letter-spacing: -.8px; }
.st-bat { width: 45px; height: 24px; margin-right: 44px; }
.st-time { font-size: 26px; width: 203px; letter-spacing: .6px; white-space: nowrap; }
.st-key { width: 32px; height: 32px; border-radius: 4px; background: #fff; color: #1b1e28; font-size: 25px; font-weight: 500; line-height: 32px; text-align: center; margin-right: 44px; }
.st-mag { width: 29px; height: 28px; margin-right: 35px; }
.st-siri { width: 32px; height: 32px; margin-right: 24px; }
.st-menu { width: 36px; height: 20px; }

/* browser window */
.chrome { position: absolute; left: 0; top: 46px; width: 2880px; height: 1620px; border-radius: 10px; overflow: hidden; background: #35363a; }
.desktop::before { content: ""; position: absolute; left: 0; top: 46px; width: 2880px; height: 1620px; border-radius: 10px; box-shadow: 0 10px 50px rgba(0, 0, 0, .8); }
.menubar { position: relative; }
.lights { display: flex; gap: 16px; }
.lights i { width: 24px; height: 24px; border-radius: 50%; background: #505153; }
.tabstrip { height: 84px; background: #3c4043; border-top: 2px solid #75787a; display: flex; padding-left: 26px; }
.tabstrip .lights { margin-top: 29px; }
.tabstrip .lights i { background: #5e6163; }
.tab { position: relative; width: 479px; height: 68px; margin: 14px 0 0 27px; border-radius: 16px 16px 0 0; background: #35363a; display: flex; align-items: center; padding: 0 0 1px 23px; }
.tab::before, .tab::after { content: ""; position: absolute; bottom: 0; width: 16px; height: 16px; }
.tab::before { left: -16px; background: radial-gradient(circle at 0 0, transparent 16px, #35363a 16.500px); }
.tab::after { right: -16px; background: radial-gradient(circle at 100% 0, transparent 16px, #35363a 16.500px); }
.tab-icon { width: 32px; height: 32px; }
.tab-title { margin-left: 16px; width: 349px; overflow: hidden; white-space: nowrap; font-size: 24px; letter-spacing: .1px; color: #cdced0; -webkit-mask-image: linear-gradient(90deg, #000 88%, transparent); mask-image: linear-gradient(90deg, #000 88%, transparent); }
.tab-x { width: 18px; height: 18px; margin-left: 18px; }
.tab-plus { width: 24px; height: 24px; margin: 36px 0 0 32px; }
.toolbar { height: 72px; display: flex; align-items: center; padding-left: 31px; }
.nav-i { width: 27px; height: 27px; margin-right: 37px; }
.omnibox { width: 2512px; height: 56px; margin-left: -7px; border-radius: 28px; background: #202124; display: flex; align-items: center; padding: 0 18px 0 28px; }
.lock { width: 17px; height: 22px; }
.url { font-size: 28px; color: #96989b; margin-left: 23px; flex: 1; letter-spacing: 0; white-space: nowrap; }
.url em { display: inline; color: #fff; }
.omni-i { width: 29px; height: 29px; }
.star { width: 36px; height: 36px; margin-left: 31px; }
.avatar { width: 44px; height: 44px; border-radius: 50%; background: #6f9a41; color: #fff; font-size: 18px; line-height: 43px; text-align: center; margin-left: 22px; }
.dots { margin-left: 39px; display: grid; gap: 4px; }
.dots i { width: 6px; height: 6px; border-radius: 50%; background: #8b8c8f; }
.bookmarks { height: 66px; display: flex; align-items: center; padding: 0 0 10px 31px; color: #fff; font-size: 24px; border-bottom: 2px solid #262323; }
.bm-apps { width: 26px; height: 27px; margin-right: 18px; }
.bm-i { width: 30px; height: 22px; margin-right: 16px; }
.bm-map { width: 28px; height: 29px; margin-right: 16px; }
.bm-t { white-space: nowrap; }
.t1 { width: 56px; } .t2 { width: 98px; letter-spacing: -.2px; } .t3 { width: 132px; letter-spacing: -.4px; }
.view { display: flex; height: 1398px; background: #fff; }
.sb { width: 30px; background: #fafafa; border-left: 2px solid #e8e8e8; padding: 403px 0 0 6px; }
.sb i { width: 16px; height: 988px; border-radius: 8px; background: #c1c1c1; }

/* repository page */
.page { width: 2850px; color: #24292e; }
.page a { color: #1d5fcf; }
.gh-top { height: 152px; border-bottom: 2px solid #e1e4e8; background: linear-gradient(180deg, transparent, #fff), linear-gradient(90deg, #e8f1ff, #ecfbf1); }
.gh-cta { width: 413px; height: 3px; margin-left: 1219px; background: #2c7c3c; border-radius: 0 0 3px 3px; }
.gh-head { height: 224px; background: #fafbfc; border-bottom: 2px solid #e1e4e8; }
.gh-repo { height: 128px; display: flex; align-items: center; padding: 0 64px 1px 64px; }
.repo-i { width: 32px; height: 32px; }
.owner { font-size: 40px; margin: -2px 0 0 15px; letter-spacing: -.3px; }
.fork { margin-left: auto; height: 56px; width: 300px; display: flex; border: 2px solid #d9dcdf; border-radius: 12px; background: #fafbfc; font-size: 24px; font-weight: 500; color: #8a929a; }
.fork-b { flex: 1; display: flex; align-items: center; justify-content: flex-end; padding-right: 24px; gap: 6px; border-right: 2px solid #d9dcdf; background: #f8f9fa; }
.fork-b svg { width: 32px; height: 32px; }
.fork b { width: 64px; text-align: center; line-height: 52px; font-weight: 600; color: #24292e; background: #fff; border-radius: 0 12px 12px 0; }
.gh-tab { margin-left: 64px; width: 220px; height: 96px; border-bottom: 4px solid #f0836f; display: flex; align-items: center; padding-left: 32px; gap: 11px; font-size: 27px; font-weight: 600; }
.gh-tab svg { width: 32px; height: 32px; }
.gh-main { margin: 64px 208px 0 210px; display: grid; gap: 32px; }
.gh-bar { display: flex; justify-content: space-between; }
.btn { width: 240px; height: 64px; border: 2px solid #d5d9dc; border-radius: 12px; background: #fcfcfd; }
.more { display: flex; align-items: center; justify-content: flex-end; gap: 6px; padding-right: 32px; }
.more i { width: 6px; height: 6px; border-radius: 50%; background: #586069; }
.commit-h { height: 110px; border: 2px solid #c3dafa; border-radius: 12px 12px 0 0; background: #f1f8ff; font-size: 28px; font-weight: 500; line-height: 108px; text-align: right; padding-right: 34px; }
.commit-b { height: 106px; border: 2px solid #e1e4e8; border-top: 0; border-radius: 0 0 12px 12px; }
.file { border: 2px solid #e1e4e8; border-radius: 12px; height: 302px; }
.file-h { height: 91px; border-bottom: 2px solid #e1e4e8; background: #f6f8fa; border-radius: 10px 10px 0 0; }
.file-b { display: flex; padding: 80px 0 0 202px; font-size: 32px; line-height: 48px; letter-spacing: -.44px; }
.file-b a { margin-left: -3px; }
.broken { width: 33px; height: 32px; }
.gh-foot { margin: 80px 176px 0 176px; border-top: 2px solid #e8eaed; padding-top: 82px; display: flex; justify-content: space-between; font-size: 24px; line-height: 32px; color: #586069; }
.foot-l { display: grid; grid-template-columns: 316px 158px 171px auto; }
.foot-r { display: grid; grid-template-columns: 198px 159px 69px; letter-spacing: -.1px; }

/* file manager windows */
.finder { position: absolute; width: 1540px; height: 872px; border-radius: 10px; background: #2b2c2e; border: 2px solid #58595a; border-top-color: #6b6d6d; box-shadow: 0 0 0 1px #101010, 0 20px 60px rgba(0, 0, 0, .52); color: #a9aaac; display: flex; flex-direction: column; overflow: hidden; }
.f1 { left: 232px; top: 314px; }
.f2 { left: 1058px; top: 272px; }
.f-top { height: 108px; flex: none; border-bottom: 1px solid #060606; background: linear-gradient(#2a2c2d, #2d2e2f); }
.f-title { height: 41px; display: flex; align-items: center; padding: 0 0 0 14px; }
.f-title .lights { width: 667px; }
.f-name { display: flex; align-items: center; gap: 9px; color: #6f7172; white-space: nowrap; }
.f-name svg { width: 30px; height: 24px; }
.f-name .k { font-size: 25px; line-height: 40px; margin-top: -2px; }
.f2 .f-title .lights { width: 657px; }
.f2 .f-name span { letter-spacing: -.15px; }
.f-tools { display: flex; padding: 7px 0 0 14px; color: #8b8b8d; }
.tb { height: 44px; border-radius: 8px; background: #3a3b3d; border-top: 1px solid #4b4c4d; display: flex; align-items: center; justify-content: center; }
.nav { width: 50px; margin-right: 2px; }
.nav svg { width: 14px; height: 24px; }
.seg { width: 220px; height: 44px; margin: 0 16px 0 176px; border-radius: 8px; background: #3a3b3d; border-top: 1px solid #4b4c4d; display: grid; grid-template-columns: 57px 55px 54px 54px; overflow: hidden; }
.seg span { display: grid; place-items: center; }
.seg span:first-child { border-right: 1px solid #333; padding-left: 4px; }
.seg span:last-child { padding-right: 5px; }
.seg .on { background: #57585a; }
.seg svg { width: 28px; height: 24px; }
.seg svg.w { width: 32px; }
.drop { width: 92px; margin-right: 16px; gap: 19px; padding-left: 8px; }
.drop svg { width: 28px; height: 28px; }
.drop svg.dn { width: 16px; height: 12px; }
.act { width: 76px; margin-right: 16px; }
.act svg { width: 24px; height: 30px; }
.act.tag svg { width: 34px; height: 20px; }
.dim { color: #5a5b5d; }
.search { width: 556px; height: 44px; margin-left: 36px; border-radius: 7px; background: #38393b; border-top: 1px solid #454647; display: flex; align-items: center; padding-left: 10px; gap: 9px; font-size: 24px; line-height: 40px; color: #58595b; }
.search svg { width: 26px; height: 26px; color: #7b7c7e; }
.f-body { display: flex; height: 714px; flex: none; }
.side { width: 254px; background: #2c2d31; overflow: hidden; }
.side h4 { margin: 8px 0 0 16px; height: 40px; line-height: 40px; font-size: 22px; font-weight: 600; white-space: nowrap; }
.side h4.k { font-size: 20.500px; font-weight: 500; }
.it { height: 52px; display: flex; align-items: center; padding-left: 34px; gap: 8px; font-size: 26px; letter-spacing: -.3px; white-space: nowrap; }
.it svg { width: 36px; height: 36px; }
.it.k { font-size: 24.500px; letter-spacing: 0; }
.it.sel { height: 48px; margin: 2px 0; background: #505155; color: #d9d9dc; }
.side h4.s2 { margin-top: 20px; }
.it.a2 { margin-top: -1px; }
.side h4.s3 { margin-top: 17px; }
.side h4.s4 { margin-top: 18px; }
.it b { width: 24px; height: 24px; border-radius: 50%; margin: 0 6px; }
.red { background: #f0776d; border: 2px solid #e5564b; }
.org { background: #f5ba62; border: 2px solid #eda63b; }
.s-bar { width: 32px; background: #3b3c40; border-left: 1px solid #4a4b4e; border-right: 2px solid #000; padding: 6px 0 0 7px; }
.s-bar i { width: 16px; height: 503px; border-radius: 8px; background: #88898d; }
.content { flex: 1; min-width: 0; background: #1f2022; display: flex; flex-direction: column; }
.blank { flex: 1; }
.path { height: 50px; border-top: 2px solid #3b3c3d; background: #2a2b2c; display: flex; align-items: center; padding-left: 26px; font-size: 22px; white-space: nowrap; }
.hd { width: 24px; height: 26px; margin-right: 10px; }
.ch { width: 8px; height: 14px; }
.fo { width: 27px; height: 24px; margin: 0 8px 0 15px; }
.p1 { width: 156px; }
.p2 { width: 66px; font-size: 21px; }
.f-stat { flex: 1; border-top: 1px solid #060606; background: #2b2c2e; padding: 0 0 2px 614px; font-size: 22px; line-height: 46px; color: #5f6062; white-space: nowrap; }
.b2 i { height: 600px; }
.cols { flex: 1; display: flex; min-height: 0; }
.col { padding-top: 1px; }
.c1 { width: 332px; }
.c2 { width: 380px; }
.row { height: 36px; display: flex; align-items: center; padding: 0 4px 2px 5px; font-size: 25px; line-height: 34px; color: #d6d6d7; letter-spacing: -.4px; }
.row.on { background: #454545; }
.row i { margin-left: auto; border: 8px solid transparent; border-left: 12px solid #8e8e8f; border-right: 0; }
.row svg { width: 30px; height: 25px; margin: 0 8px 0 7px; }
.row .k { font-size: 22.500px; }
.strip { width: 30px; background: #292929; border-left: 1px solid #353535; border-right: 1px solid #353535; }
.preview { width: 450px; display: flex; flex-direction: column; }
.thumb { height: 492px; padding: 37px 0 0 30px; overflow: hidden; border-bottom: 2px solid #363738; }
.paper { width: 340px; height: 380px; margin-bottom: 58px; }
.fname { font-size: 28px; font-weight: 600; color: #dcdcdd; line-height: 34px; margin: 5px 0 0 17px; }
.more-a { flex: 1; display: flex; flex-direction: column; align-items: center; padding-top: 29px; font-size: 21px; line-height: 30px; gap: 9px; }
.more-a svg { width: 34px; height: 34px; }
.v-bar { flex: 1; background: #292929; border-left: 1px solid #3c3c3c; padding: 6px 0 0 7px; }
.v-bar i { width: 16px; height: 417px; border-radius: 8px; background: #6b6b6b; }
.h-bar { height: 30px; background: #2b2b2b; border-top: 1px solid #454545; padding: 7px 3px 0 0; }
.h-bar i { height: 16px; border-radius: 8px; background: linear-gradient(90deg, transparent calc(100% - 14px), #909090 0 calc(100% - 12px), transparent 0 calc(100% - 6px), #909090 0 calc(100% - 4px), transparent 0), #6b6b6b; }
.f2 .path { padding-left: 823px; }
.p3 { width: 140px; font-size: 23px; letter-spacing: -.5px; }
.mdi { width: 25px; height: 28px; margin: 0 9px 0 15px; }

/* editor window */
.typora { position: absolute; left: 884px; top: 414px; width: 1280px; height: 1158px; border-radius: 10px; background: #373a3f; border: 2px solid #5a5e62; border-top-color: #7b7e80; box-shadow: 0 0 0 1px #0c0c0c, 0 40px 100px rgba(0, 0, 0, .65); }
.t-bar { height: 40px; display: flex; align-items: center; padding-left: 14px; }
.typora .lights { width: 529px; }
.typora .lights i { background: #ed6a5e; }
.typora .lights i:nth-child(2) { background: #e3c04b; }
.typora .lights i:nth-child(3) { background: #71c048; }
.t-name { display: flex; align-items: center; }
.t-name svg { width: 28px; height: 31px; margin-right: 9px; }
.t-name b { font-weight: 500; color: #b1b3b5; width: 55px; letter-spacing: -.3px; }
.t-name span { font-size: 25px; line-height: 40px; margin-top: -1px; color: #6e7174; white-space: nowrap; }

/* dock */
.dock { position: absolute; left: 448px; top: 1665px; width: 1984px; height: 150px; border: 3px solid #434955; border-radius: 14px; background: #1b1f2e; display: flex; padding: 7px 5px 0; }
.app { position: relative; width: 110px; }
.app > svg { width: 110px; height: 110px; }
.app.run::after { content: ""; display: block; width: 8px; height: 9px; border-radius: 50%; background: #9a9fb4; margin: 3px auto 0; }
.app em { position: absolute; left: 71px; top: 1px; width: 39px; height: 40px; border-radius: 50%; background: #de4a3d; color: #fff; font-size: 22px; line-height: 39px; text-align: center; letter-spacing: -.5px; }
.sep { width: 51px; display: flex; justify-content: center; padding-top: 9px; }
.sep::before { content: ""; width: 2px; height: 98px; background: #555a68; }
.sep.s { width: 48px; }
```
